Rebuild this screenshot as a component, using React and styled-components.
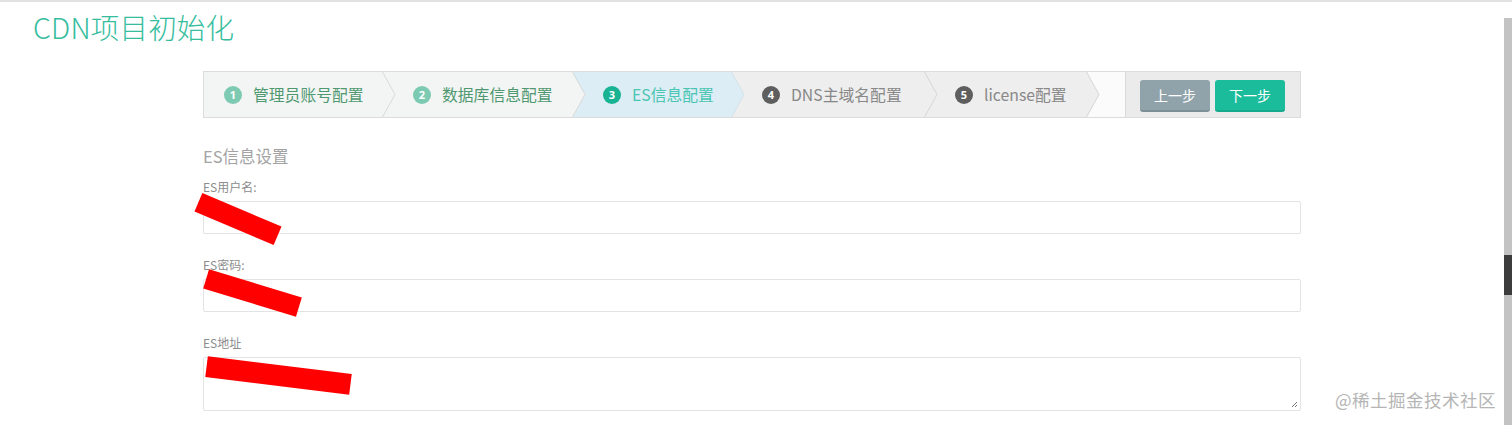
import React from "react";
import styled, { createGlobalStyle } from "styled-components";

const Global = createGlobalStyle`
  html, body { margin: 0; padding: 0; background: #fff; }
  body { font-family: "Noto Sans CJK SC", "Noto Sans", sans-serif; overflow: hidden; }
  * { box-sizing: border-box; }
`;

const Page = styled.div`
  position: relative;
  width: 1512px;
  height: 425px;
  border-top: 2px solid #e2e2e2;
  overflow: hidden;
`;

const Title = styled.h1`
  margin: 0;
  padding: 6px 0 0 33px;
  font-size: 28.5px;
  line-height: 38px;
  font-weight: 300;
  color: #35bd9d;
  letter-spacing: 0.2px;
`;

const Main = styled.div`
  width: 1098px;
  margin: 25px 0 0 203px;
`;

const StepBar = styled.div`
  display: flex;
  height: 47px;
  border: 1px solid #dcdcdc;
  background: #fbfbfb;
`;

const Steps = styled.ol`
  display: flex;
  flex: 1;
  margin: 0;
  padding: 0;
  list-style: none;
`;

const Step = styled.li`
  position: relative;
  z-index: ${(p) => p.$z};
  display: flex;
  align-items: center;
  gap: 11px;
  width: ${(p) => p.$w}px;
  padding-left: ${(p) => p.$pl}px;
  background: ${(p) => p.$bg};
  font-size: 15.8px;
  color: ${(p) => p.$fg};
  white-space: nowrap;
`;

const Arrow = styled.svg`
  position: absolute;
  top: -1px;
  right: -13px;
  width: 13px;
  height: 47px;
  overflow: visible;
`;

const Num = styled.span`
  flex: none;
  width: 18px;
  height: 18px;
  border-radius: 50%;
  background: ${(p) => p.$bg};
  color: #fff;
  font-size: 11px;
  font-weight: 700;
  line-height: 18px;
  text-align: center;
  font-family: "Open Sans", "Noto Sans", sans-serif;
`;

const Actions = styled.div`
  flex: none;
  display: flex;
  align-items: center;
  gap: 5px;
  width: 175px;
  padding: 3px 0 0 14px;
  background: #ebebeb;
  border-left: 1px solid #dadada;
`;

const Button = styled.button`
  width: 70px;
  height: 32px;
  border: none;
  border-radius: 3px;
  background: ${(p) => p.$bg};
  border-bottom: 2px solid ${(p) => p.$edge};
  color: #fff;
  font-size: 14px;
  font-family: "Noto Sans CJK SC", sans-serif;
  padding: 0;
`;

const Form = styled.div`
  display: flex;
  flex-direction: column;
  padding-top: 26px;
`;

const Heading = styled.h3`
  margin: 0 0 10px;
  font-size: 16.5px;
  line-height: 24px;
  font-weight: 400;
  color: #a3a3a3;
`;

const Field = styled.div`
  display: flex;
  flex-direction: column;
  gap: 5px;
  margin-bottom: 22px;
`;

const Label = styled.label`
  font-size: 12px;
  line-height: 18px;
  color: #8c8c8c;
`;

const Input = styled.div`
  height: 33px;
  border: 1px solid #e3e3e3;
  border-radius: 2px;
  background: #fff;
`;

const TextArea = styled.div`
  position: relative;
  height: 54px;
  border: 1px solid #e3e3e3;
  border-radius: 2px;
  background: #fff;
`;

const Grip = styled.svg`
  position: absolute;
  right: 2px;
  bottom: 2px;
  width: 8px;
  height: 8px;
`;

const Redact = styled.div`
  position: absolute;
  background: #ff0000;
  transform-origin: center;
`;

const Watermark = styled.div`
  position: absolute;
  right: 16px;
  bottom: 13px;
  font-size: 17.5px;
  color: #b5b5b5;
  letter-spacing: 0.5px;
`;

const Scroll = styled.div`
  position: absolute;
  top: 0;
  right: 0;
  width: 8px;
  height: 425px;
  background: #fff;
  display: flex;
  flex-direction: column;
`;

const ScrollTrack = styled.div`
  position: relative;
  flex: 1;
  margin-top: 16px;
  background: #c3c3c3;
`;

const ScrollThumb = styled.div`
  position: absolute;
  left: 0;
  top: 237px;
  width: 8px;
  height: 40px;
  background: #3c3c3c;
`;

const steps = [
  { n: 1, t: "管理员账号配置", w: 178, pl: 20, bg: "#f3f5f5", fg: "#4f9870", nb: "#7dcab3", st: "#d9d9d9" },
  { n: 2, t: "数据库信息配置", w: 190, pl: 31, bg: "#f3f5f5", fg: "#4f9870", nb: "#7dcab3", st: "#d9d9d9" },
  { n: 3, t: "ES信息配置", w: 159, pl: 31, bg: "#dcedf5", fg: "#4ac5b2", nb: "#17b393", st: "#d2e3ea" },
  { n: 4, t: "DNS主域名配置", w: 193, pl: 31, bg: "#eeeeee", fg: "#888888", nb: "#5e5e5e", st: "#d6d6d6" },
  { n: 5, t: "license配置", w: 162, pl: 31, bg: "#eeeeee", fg: "#888888", nb: "#5e5e5e", st: "#d6d6d6" },
];

export default function App() {
  return (
    <>
      <Global />
      <Page>
        <Title>CDN项目初始化</Title>
        <Main>
          <StepBar>
            <Steps>
              {steps.map((s, i) => (
                <Step key={s.n} $w={s.w} $pl={s.pl} $bg={s.bg} $fg={s.fg} $z={10 - i}>
                  <Num $bg={s.nb}>{s.n}</Num>
                  <span>{s.t}</span>
                  <Arrow viewBox="0 0 13 47" preserveAspectRatio="none">
                    <polygon points="0,0 13,23.5 0,47" fill={s.bg} />
                    <polyline points="0,0 13,23.5 0,47" fill="none" stroke={s.st} strokeWidth="1" />
                  </Arrow>
                </Step>
              ))}
            </Steps>
            <Actions>
              <Button $bg="#91a3aa" $edge="#7d8e95">上一步</Button>
              <Button $bg="#1abc9c" $edge="#16a98c">下一步</Button>
            </Actions>
          </StepBar>
          <Form>
            <Heading>ES信息设置</Heading>
            <Field>
              <Label>ES用户名:</Label>
              <Input />
            </Field>
            <Field>
              <Label>ES密码:</Label>
              <Input />
            </Field>
            <Field>
              <Label>ES地址</Label>
              <TextArea>
                <Grip viewBox="0 0 8 8">
                  <path d="M7 2 L2 7 M7 5 L5 7" stroke="#777" strokeWidth="1" />
                </Grip>
              </TextArea>
            </Field>
          </Form>
        </Main>
        <Redact style={{ left: 195, top: 207, width: 86, height: 20, transform: "rotate(23deg)" }} />
        <Redact style={{ left: 204, top: 281, width: 97, height: 20, transform: "rotate(17deg)" }} />
        <Redact style={{ left: 206, top: 363, width: 145, height: 21, transform: "rotate(7deg)" }} />
        <Watermark>@稀土掘金技术社区</Watermark>
        <Scroll>
          <ScrollTrack>
            <ScrollThumb />
          </ScrollTrack>
        </Scroll>
      </Page>
    </>
  );
}
